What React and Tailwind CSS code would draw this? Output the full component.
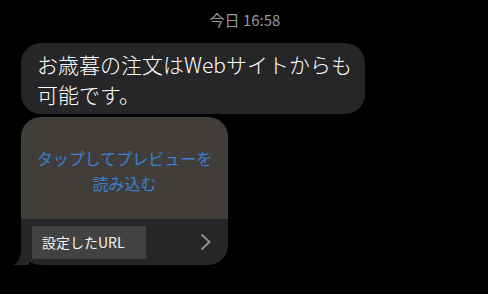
export default function App() {
  const jp = { fontFamily: '"Noto Sans CJK JP", "Noto Sans", sans-serif' };
  return (
    <div className="w-[488px] h-[294px] bg-black overflow-hidden" style={jp}>
      <div className="pt-[10px] h-[43px] text-center text-[15px] leading-[20px] text-[#98989d] pl-[2px]">
        今日 16:58
      </div>
      <div className="ml-[21px] w-[344px] h-[71px] rounded-[20px] bg-[#262628] pl-[16px] pt-[6px] text-[21px] leading-[30px] text-white font-light">
        お歳暮の注文はWebサイトからも
        <br />
        可能です。
      </div>
      <div className="relative ml-[21px] mt-[3px] w-[207px]">
        <div className="rounded-[20px] overflow-hidden">
          <div className="h-[102px] bg-[#413e39] flex flex-col items-center justify-center pt-[6px] text-[16px] leading-[25px] text-[#3a7fd4] text-center">
            <div>タップしてプレビューを</div>
            <div>読み込む</div>
          </div>
          <div className="h-[46px] bg-[#262628] flex items-center pl-[11px] pr-[16px]">
            <div className="w-[114px] h-[33px] bg-[#424242] flex items-center pl-[10px] text-[14px] text-[#f2f2f2]">
              設定したURL
            </div>
            <div className="flex-1" />
            <svg width="12" height="18" viewBox="0 0 12 18">
              <path d="M2 2 L9.5 9 L2 16" stroke="#8e8e93" strokeWidth="2" fill="none" strokeLinecap="round" strokeLinejoin="round" />
            </svg>
          </div>
        </div>
        <svg className="absolute left-[-8px] bottom-0" width="24" height="18" viewBox="0 0 24 18">
          <path d="M8 0 L16 0 L16 18 L0 18 C6 16 8 10 8 0 Z" fill="#262628" />
        </svg>
      </div>
    </div>
  );
}
